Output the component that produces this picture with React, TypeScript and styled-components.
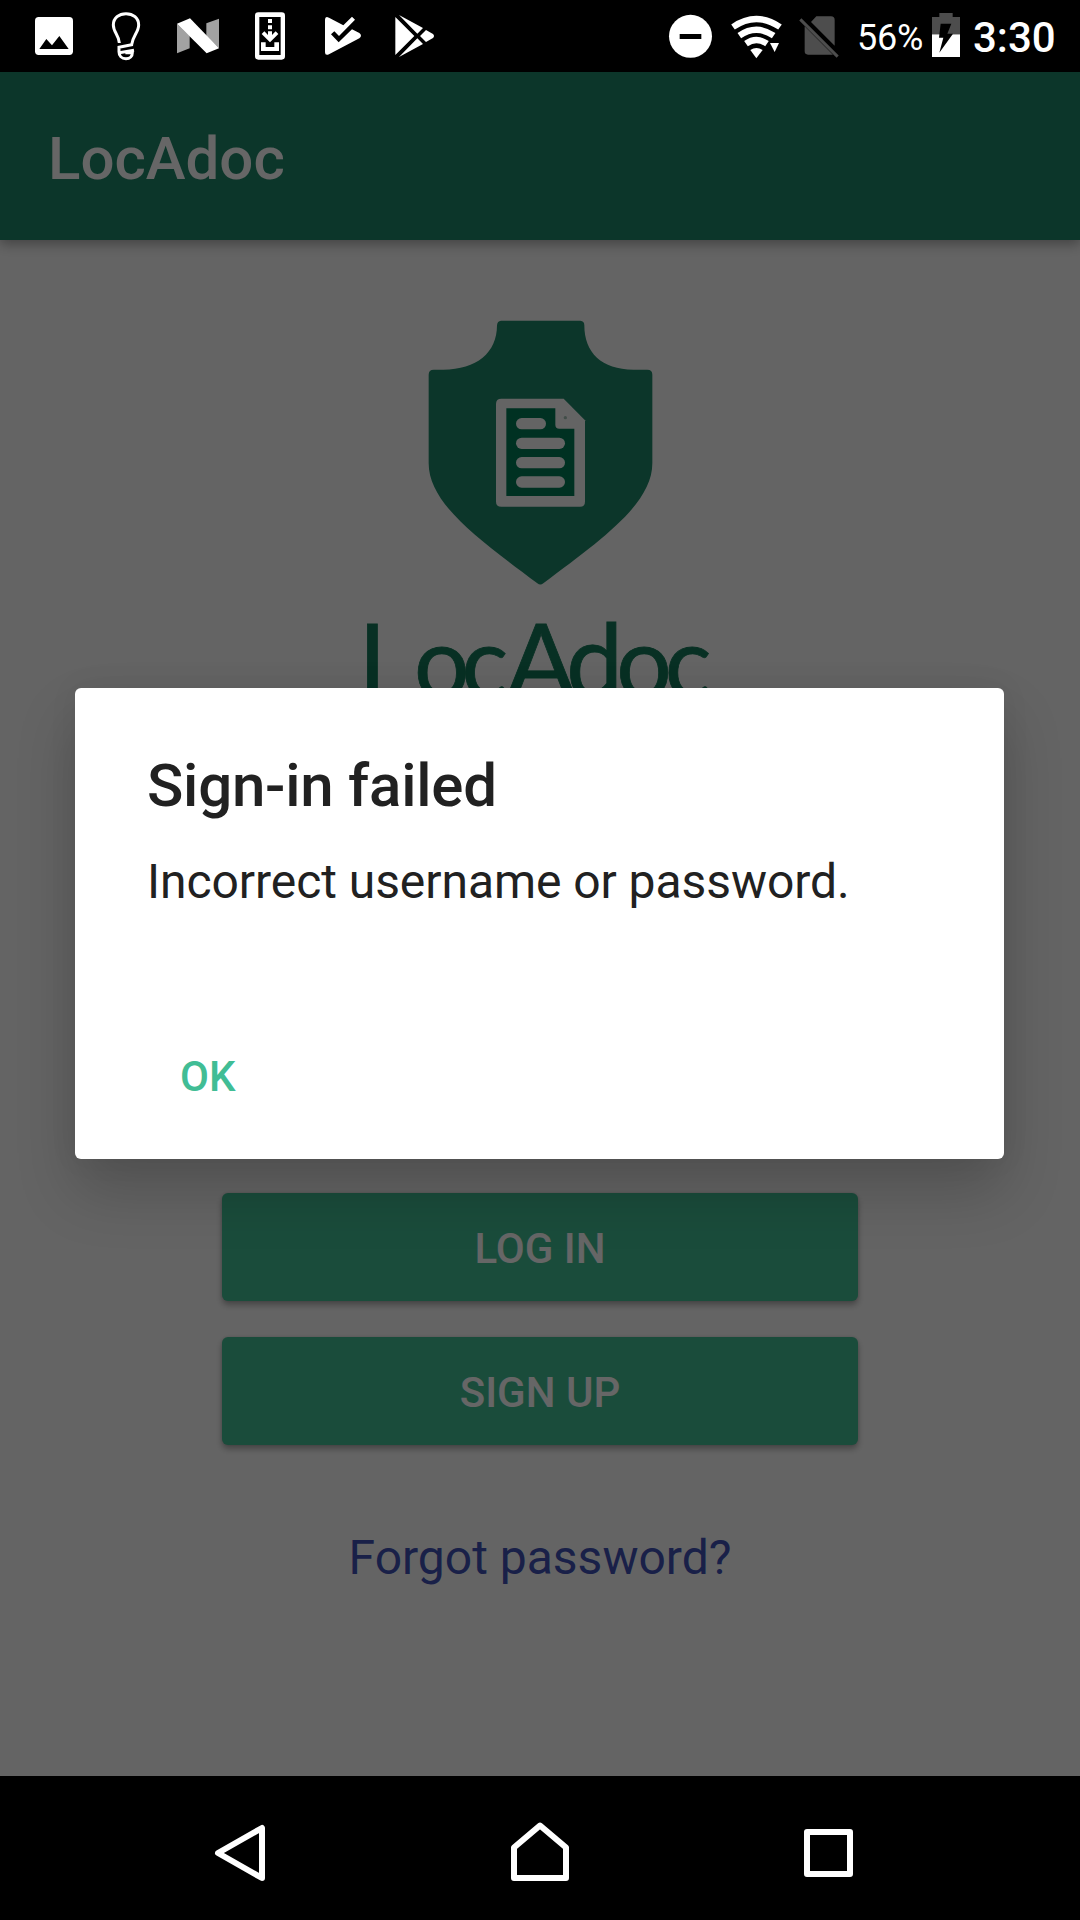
import React from "react";
import styled, { createGlobalStyle } from "styled-components";

const GlobalStyle = createGlobalStyle`
  *, *::before, *::after { box-sizing: border-box; }
  body { margin: 0; background: #000; font-family: Roboto, "Liberation Sans", sans-serif; }
`;

const palette = {
  primary: "#208769",
  accent: "#41bd95",
  surface: "#fafafa",
  link: "#3f51b5",
  text: "#212121",
};

const Screen = styled.div`
  display: flex;
  flex-direction: column;
  width: 1080px;
  height: 1920px;
  overflow: hidden;
  background: #000;
`;

const StatusBar = styled.header`
  display: flex;
  justify-content: space-between;
  flex: none;
  height: 72px;
  padding: 0 23px 0 30px;
  color: #fff;
`;

const StatusGroup = styled.div<{ $gap: number }>`
  display: flex;
  gap: ${(p) => p.$gap}px;
`;

const Glyph = styled.svg<{ $w: number; $h: number }>`
  display: block;
  flex: none;
  width: ${(p) => p.$w}px;
  height: ${(p) => p.$h}px;
`;

const BatteryLabel = styled.span`
  width: 58px;
  padding-top: 2px;
  font-size: 36px;
  letter-spacing: -0.2px;
  line-height: 72px;
  white-space: nowrap;
`;

const Clock = styled.time`
  width: 84px;
  padding-top: 2px;
  margin-left: -4px;
  font-size: 42px;
  font-weight: 500;
  line-height: 72px;
  white-space: nowrap;
`;

const Activity = styled.div`
  position: relative;
  flex: 1;
  display: flex;
  flex-direction: column;
  background: ${palette.surface};
`;

const AppBar = styled.div`
  position: relative;
  display: flex;
  align-items: center;
  flex: none;
  height: 168px;
  padding: 5px 48px 0;
  background: ${palette.primary};
  box-shadow: 0 4px 12px rgba(0, 0, 0, 0.34);
`;

const AppTitle = styled.h1`
  margin: 0;
  color: #fff;
  font-size: 60px;
  font-weight: 500;
  line-height: 70px;
`;

const Content = styled.main`
  display: flex;
  flex-direction: column;
  align-items: center;
  flex: 1;
`;

const Hero = styled.section`
  display: flex;
  flex-direction: column;
  align-items: center;
  width: 100%;
  height: 953px;
  padding-top: 60px;
`;

const Wordmark = styled.div`
  width: 364px;
  height: 120px;
  margin-top: -2px;
  color: #16795a;
  font-family: Lato, "Open Sans", sans-serif;
  font-size: 103px;
  font-kerning: none;
  line-height: 120px;
  white-space: nowrap;
  -webkit-text-stroke: 0.8px #16795a;
`;

const Letter = styled.span<{ $size: number; $track: number }>`
  font-size: ${(p) => p.$size}px;
  letter-spacing: ${(p) => p.$track}px;
`;

const Actions = styled.div`
  display: flex;
  flex-direction: column;
  gap: 36px;
  width: 636px;
`;

const RaisedButton = styled.button`
  height: 108px;
  padding: 3px 0 0;
  border: 0;
  border-radius: 6px;
  background: ${palette.accent};
  color: #fff;
  font: 500 42px/50px Roboto, "Liberation Sans", sans-serif;
  box-shadow: 0 4px 6px rgba(0, 0, 0, 0.3), 0 0 3px rgba(0, 0, 0, 0.12);
`;

const ForgotLink = styled.a`
  margin-top: 85px;
  color: ${palette.link};
  font-size: 48px;
  line-height: 56px;
  text-decoration: none;
`;

const Scrim = styled.div`
  position: absolute;
  inset: 0;
  background: rgba(0, 0, 0, 0.6);
`;

const Dialog = styled.section`
  position: absolute;
  left: 75px;
  top: 616px;
  width: 929px;
  height: 471px;
  display: flex;
  flex-direction: column;
  align-items: flex-start;
  padding: 63px 72px 0;
  border-radius: 6px;
  background: #fff;
  color: ${palette.text};
  box-shadow: 0 32px 60px rgba(0, 0, 0, 0.19), 0 0 30px rgba(0, 0, 0, 0.06);
`;

const DialogTitle = styled.h2`
  margin: 0;
  font-size: 60px;
  font-weight: 500;
  letter-spacing: -0.24px;
  line-height: 70px;
`;

const DialogMessage = styled.p`
  margin: 33px 0 0;
  font-size: 48px;
  letter-spacing: -0.06px;
  line-height: 56px;
`;

const TextButton = styled.button`
  margin: 142px 0 0 12px;
  padding: 0 21px;
  border: 0;
  background: none;
  color: ${palette.accent};
  font: 500 42px/50px Roboto, "Liberation Sans", sans-serif;
`;

const NavBar = styled.nav`
  display: flex;
  align-items: center;
  justify-content: space-between;
  flex: none;
  height: 144px;
  padding: 0 222px 0 210px;
`;

const wordmark = [
  { char: "L", size: 103, track: 3 },
  { char: "o", size: 98, track: -8 },
  { char: "c", size: 98, track: -2 },
  { char: "A", size: 103, track: -10 },
  { char: "d", size: 102, track: -7 },
  { char: "o", size: 98, track: -7 },
  { char: "c", size: 98, track: 0 },
];

const Notifications = () => (
  <StatusGroup $gap={24}>
    <Glyph $w={48} $h={72} viewBox="90 0 144 216">
      <rect x="105" y="51" width="114" height="114" rx="11" fill="#fff" />
      <path d="M118 147L139 117L156 136L178 108L206 147Z" fill="#000" />
    </Glyph>
    <Glyph $w={48} $h={72} viewBox="306 0 144 216" fill="none" stroke="#fff" strokeWidth="9">
      <path d="M358 129C357 105 340 97 340 75C340 54 357 41 378 41C399 41 416 54 416 75C416 97 398 107 395 134L357 142V155C357 168 365 176 378 176C390 176 397 168 397 158H376" />
      <path d="M358 158L402 151" />
    </Glyph>
    <Glyph $w={48} $h={72} viewBox="522 0 144 216">
      <path d="M531 71L569 108V145L531 160ZM619 70L657 56V145L619 108Z" fill="#a2a2a2" />
      <path d="M531 71L570 55L657 145L620 160Z" fill="#fff" />
    </Glyph>
    <Glyph $w={48} $h={72} viewBox="78 0 144 216">
      <path
        fill="#fff"
        fillRule="evenodd"
        d="M115 37H185Q195 37 195 47V169Q195 179 185 179H115Q105 179 105 169V47Q105 37 115 37ZM118 51V165H182V51Z"
      />
      <path
        fill="#fff"
        d="M144 57H156V69H144ZM144 76H156V88H144ZM144 94H156V105L167 94L175 102L150 127L125 102L133 94L144 105ZM123 127H137V141H163V127H177V153H123Z"
      />
    </Glyph>
    <Glyph $w={48} $h={72} viewBox="294 0 144 216">
      <path
        fill="#fff"
        d="M315 59Q315 47 327 53L370 76L396 50L405 59L357 108L343 94L333 103L356 127L396 88L418 99Q428 107 418 115L327 163Q315 168 315 157Z"
      />
    </Glyph>
    <Glyph $w={48} $h={72} viewBox="510 0 144 216" fill="#fff">
      <path d="M526 51L583 108L526 165ZM537 45L609 84L592 101ZM537 171L592 115L609 132ZM600 108L618 90L639 102Q645 108 639 114L618 126Z" />
    </Glyph>
  </StatusGroup>
);

const SystemStatus = () => (
  <StatusGroup $gap={16}>
    <Glyph $w={48} $h={72} viewBox="48 0 144 216">
      <circle cx="121.500" cy="109" r="64.500" fill="#fff" />
      <rect x="89" y="102" width="65" height="15" fill="#000" />
    </Glyph>
    <Glyph $w={52} $h={72} viewBox="240 0 156 216">
      <g fill="none" stroke="#fff" strokeWidth="19">
        <path d="M249 81Q319 33 390 81" />
        <path d="M268 107Q319 72 371 107" />
        <path d="M288 131Q319 109 351 131" />
      </g>
      <path d="M301 150Q319 138 338 150L319 175Z" fill="#fff" />
      <path d="M356 125H391L374 160Z" fill="#000" />
      <path d="M360 129H387L374 156Z" fill="#fff" />
    </Glyph>
    <Glyph $w={43} $h={72} viewBox="444 0 129 216">
      <path d="M483 66L499 49H543Q554 49 554 60V137ZM464 79L549 164H474Q464 164 464 154Z" fill="#4d4d4d" />
      <path d="M451 58L563 170" stroke="#4d4d4d" strokeWidth="9" />
    </Glyph>
    <BatteryLabel>56%</BatteryLabel>
    <Glyph $w={30} $h={72} viewBox="243 0 90 216">
      <path d="M246 51H268V39H308V51H330V103H246Z" fill="#4d4d4d" />
      <path d="M246 103H330V171H246Z" fill="#fff" />
      <path d="M272 71H304L292 101H309L268 158L280 113H267Z" fill="#000" />
    </Glyph>
    <Clock>3:30</Clock>
  </StatusGroup>
);

const ShieldLogo = () => (
  <Glyph $w={280} $h={300} viewBox="0 0 840 900">
    <path
      fill={palette.primary}
      d="M303 62H541Q553 63 553 76C553 158 605 209 700 209H742Q757 209 757 224V490C757 610 610 715 430 850Q421 857 412 850C232 715 86 610 86 490V224Q86 209 101 209H130C230 209 291 158 291 76Q292 63 303 62Z"
    />
    <path fill={palette.surface} d="M304 296H491L555 361V605Q555 620 540 620H304Q288 620 288 605V312Q288 296 304 296Z" />
    <path fill="#007c55" d="M319 325H466V374Q466 386 478 386H523V588H319Z" />
    <g stroke={palette.surface} strokeWidth="34" strokeLinecap="round">
      <path d="M365 371H421" />
      <path d="M365 430H478" />
      <path d="M365 488H478" />
      <path d="M365 546H478" />
    </g>
    <circle cx="496" cy="353" r="5" fill="#a5c2b6" />
  </Glyph>
);

export default function App() {
  return (
    <Screen>
      <GlobalStyle />
      <StatusBar>
        <Notifications />
        <SystemStatus />
      </StatusBar>
      <Activity>
        <AppBar>
          <AppTitle>LocAdoc</AppTitle>
        </AppBar>
        <Content>
          <Hero>
            <ShieldLogo />
            <Wordmark>
              {wordmark.map(({ char, size, track }, i) => (
                <Letter key={i} $size={size} $track={track}>
                  {char}
                </Letter>
              ))}
            </Wordmark>
          </Hero>
          <Actions>
            <RaisedButton>LOG IN</RaisedButton>
            <RaisedButton>SIGN UP</RaisedButton>
          </Actions>
          <ForgotLink>Forgot password?</ForgotLink>
        </Content>
        <Scrim />
        <Dialog role="alertdialog">
          <DialogTitle>Sign-in failed</DialogTitle>
          <DialogMessage>Incorrect username or password.</DialogMessage>
          <TextButton>OK</TextButton>
        </Dialog>
      </Activity>
      <NavBar>
        <Glyph $w={60} $h={72} viewBox="210 1812 60 72" fill="none" stroke="#fff" strokeWidth="6" strokeLinejoin="round">
          <path d="M262 1828V1878L218 1853Z" />
        </Glyph>
        <Glyph $w={72} $h={72} viewBox="498 1812 72 72" fill="none" stroke="#fff" strokeWidth="6" strokeLinejoin="round">
          <path d="M514 1878V1847.500L540 1825.500L566 1847.500V1878Z" />
        </Glyph>
        <Glyph $w={60} $h={72} viewBox="798 1812 60 72" fill="none" stroke="#fff" strokeWidth="6" strokeLinejoin="round">
          <path d="M807 1832H850V1874H807Z" />
        </Glyph>
      </NavBar>
    </Screen>
  );
}
